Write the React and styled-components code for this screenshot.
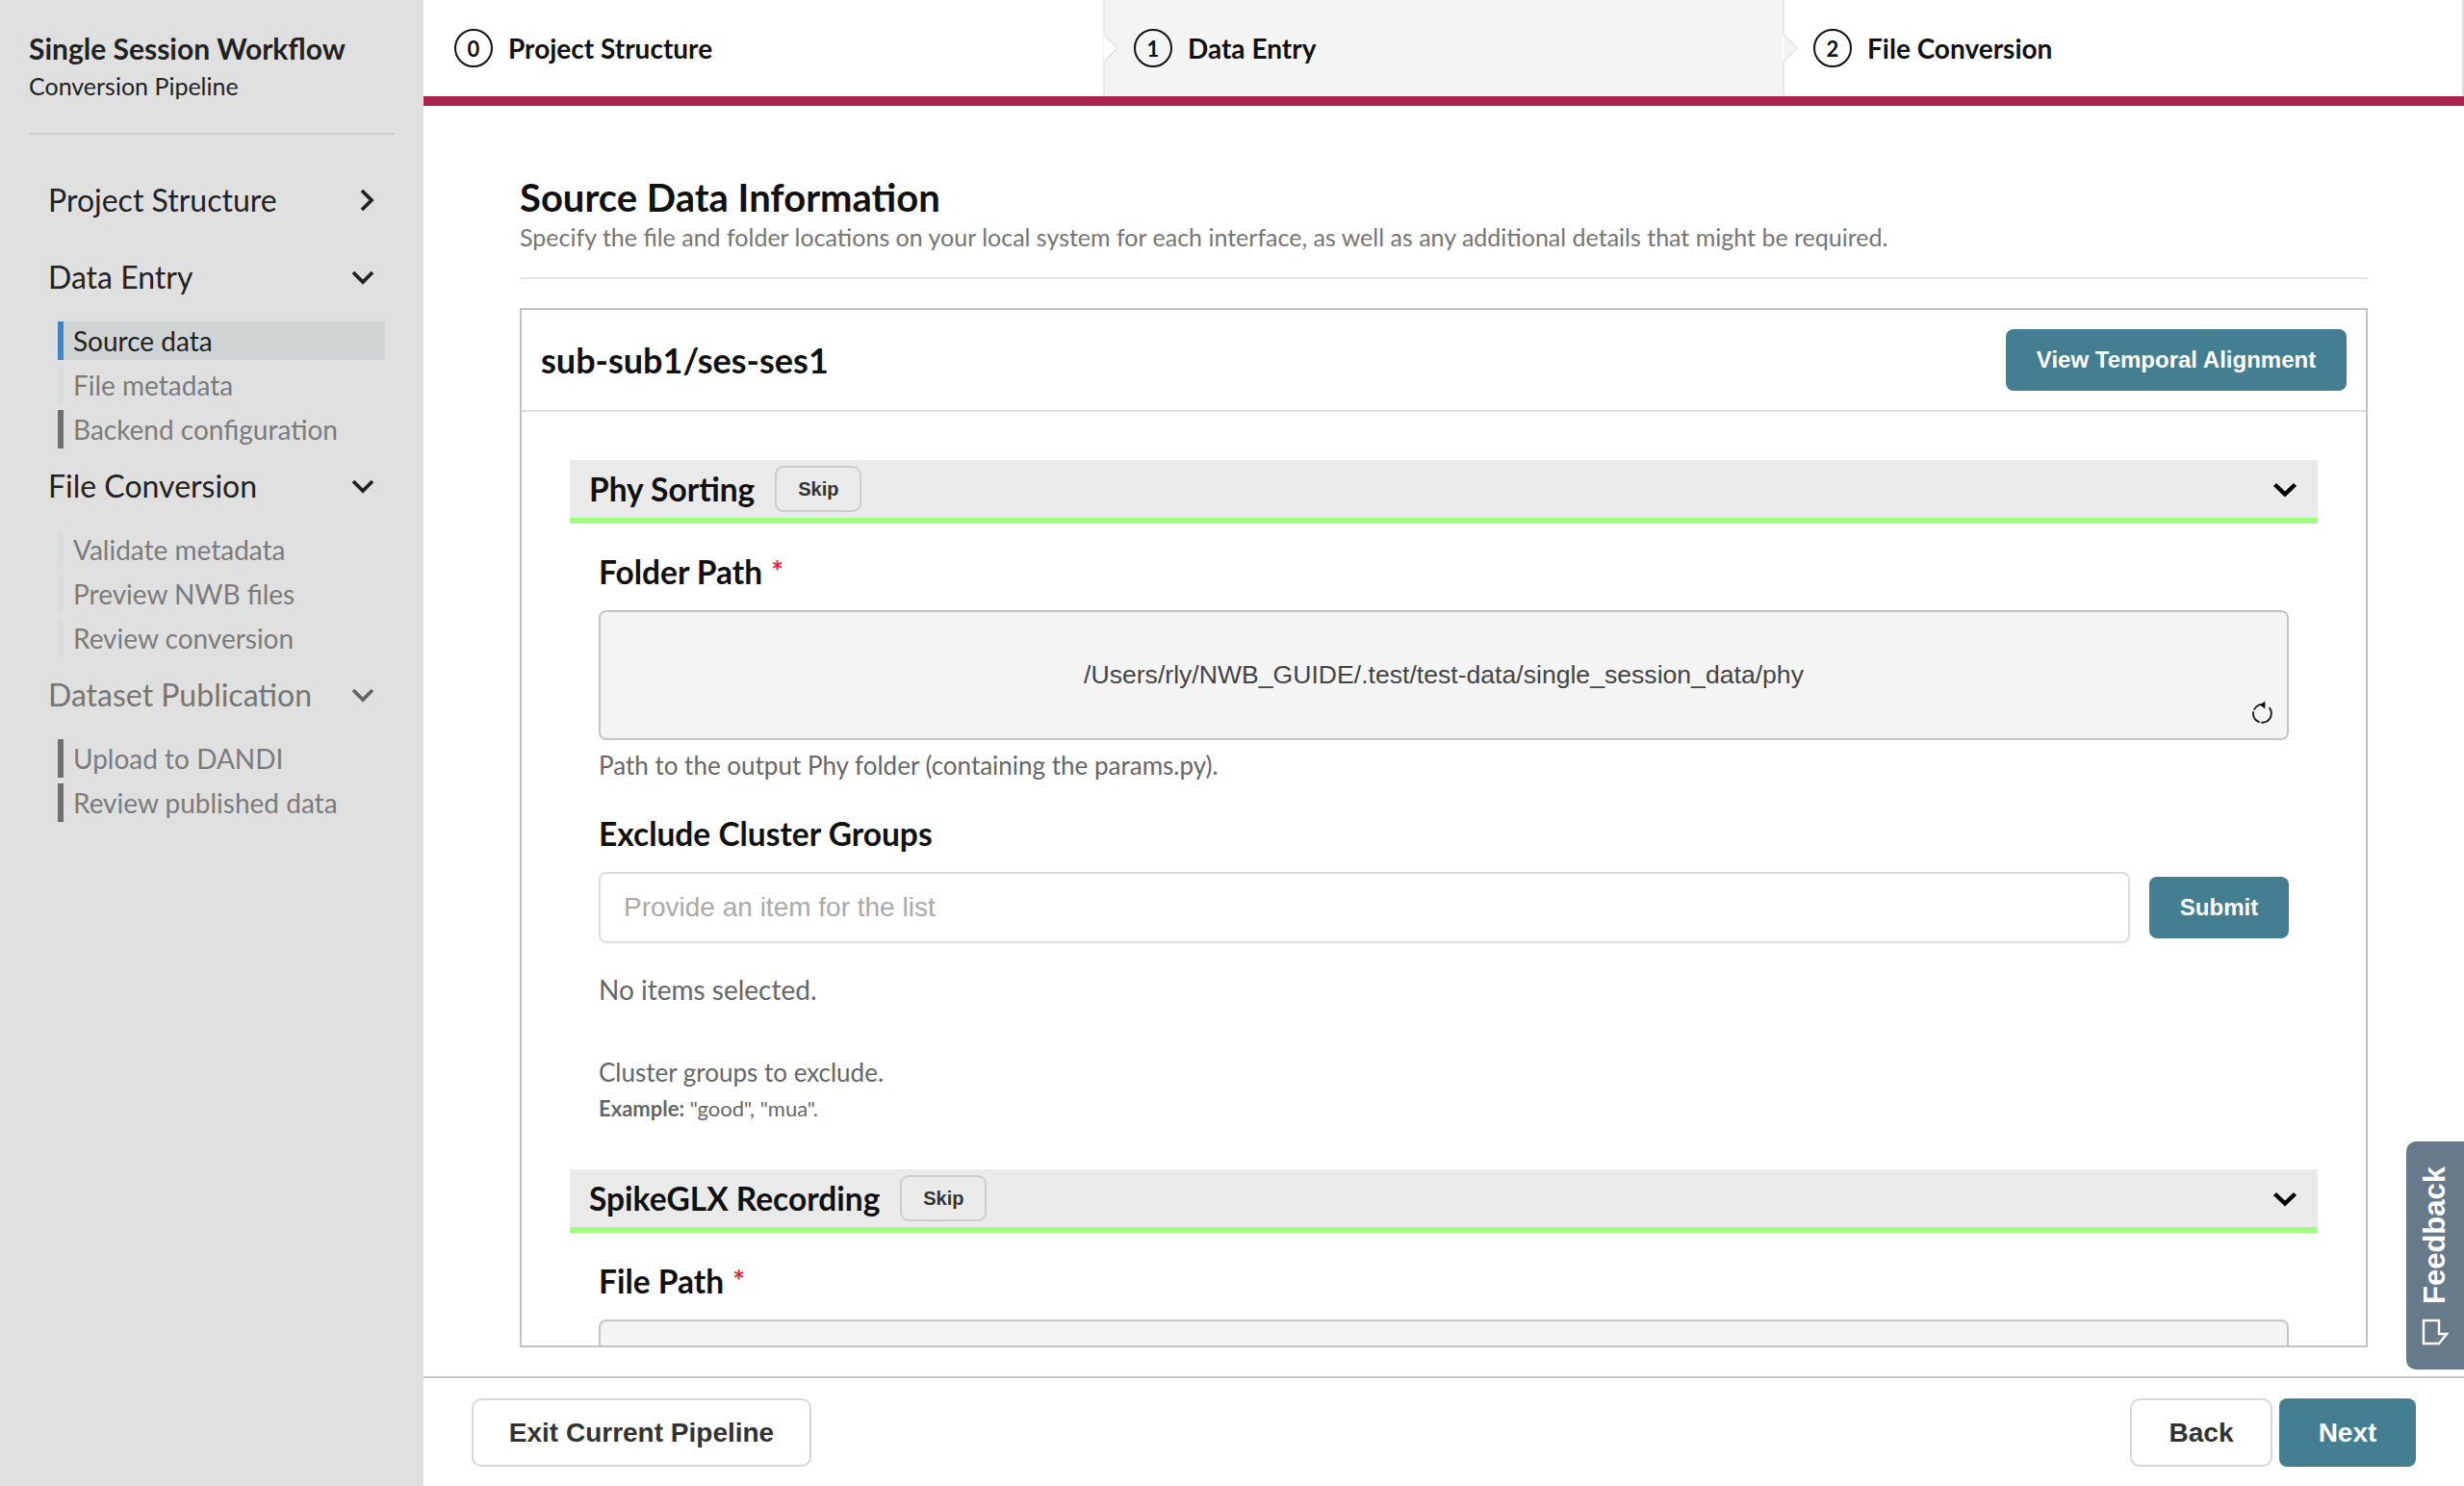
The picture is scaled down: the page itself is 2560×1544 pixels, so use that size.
import React from 'react';
import styled, { createGlobalStyle } from 'styled-components';

const GlobalStyle = createGlobalStyle`
  html, body {
    margin: 0;
    padding: 0;
    background: #fff;
    overflow: hidden;
  }
  * {
    box-sizing: border-box;
  }
`;

const lato = `Lato, "Liberation Sans", sans-serif`;
const helvetica = `"Liberation Sans", Arial, sans-serif`;

const Shell = styled.div`
  display: flex;
  position: relative;
  width: 2560px;
  height: 1544px;
  overflow: hidden;
  font-family: ${lato};
`;

const Sidebar = styled.aside`
  flex: 0 0 440px;
  background: #e0e0e0;
  padding: 0 30px;
`;

const SideHeader = styled.div`
  height: 140px;
  padding-top: 28px;
  border-bottom: 2px solid #ccc;
`;

const SideTitle = styled.div`
  font-size: 30px;
  font-weight: 700;
  line-height: 44px;
  color: #222;
`;

const SideSubtitle = styled.div`
  font-size: 25px;
  line-height: 34px;
  color: #222;
`;

const Nav = styled.nav`
  margin: 39px 0 0 20px;
`;

const NavGroup = styled.div`
  margin-bottom: ${p => (p.$open ? '0' : '20px')};
`;

const NavHeader = styled.div`
  display: flex;
  align-items: center;
  justify-content: space-between;
  height: 60px;
  width: 339px;
  padding-bottom: 3px;
  font-size: 32px;
  color: ${p => (p.$muted ? '#757575' : '#222')};
`;

const NavList = styled.div`
  display: flex;
  flex-direction: column;
  gap: 6px;
  margin: 15px 0 10px 10px;
`;

const NavItem = styled.div`
  display: flex;
  align-items: center;
  width: 340px;
  height: 40px;
  padding-left: 10px;
  border-left: 6px solid ${p => p.$bar};
  background: ${p => (p.$active ? '#cfd4d4' : 'transparent')};
  font-size: 28px;
  color: ${p => (p.$active ? '#222' : '#7b7b7b')};
`;

const Main = styled.main`
  flex: 1;
  min-width: 0;
  display: flex;
  flex-direction: column;
`;

const Stepper = styled.div`
  display: grid;
  grid-template-columns: 706px 706px 708px;
  height: 110px;
  flex: none;
  border-bottom: 10px solid #a9254b;
`;

const Step = styled.div`
  position: relative;
  display: flex;
  align-items: center;
  gap: 16px;
  padding-left: 32px;
  background: ${p => (p.$shaded ? '#f4f4f4' : '#fff')};
  border-right: ${p => (p.$last ? '2px solid #ddd' : 'none')};
`;

const StepNotch = styled.svg`
  position: absolute;
  left: 0;
  top: 0;
`;

const StepNumber = styled.span`
  display: flex;
  align-items: center;
  justify-content: center;
  width: 40px;
  height: 40px;
  border: 2px solid #111;
  border-radius: 50%;
  font-size: 22px;
  font-weight: 700;
  color: #111;
`;

const StepLabel = styled.span`
  font-size: 28px;
  font-weight: 700;
  color: #111;
`;

const Content = styled.div`
  flex: 1;
  min-height: 0;
  display: flex;
  flex-direction: column;
  padding: 70px 100px 30px;
`;

const PageTitle = styled.h1`
  margin: 0;
  font-size: 40px;
  font-weight: 700;
  line-height: 50px;
  color: #111;
`;

const PageSubtitle = styled.p`
  margin: 0 0 1px;
  font-size: 25px;
  line-height: 32px;
  color: #757575;
`;

const Rule = styled.hr`
  width: 100%;
  margin: 25px 0 30px;
  border: 0;
  border-top: 2px solid #e2e2e2;
`;

const Card = styled.section`
  flex: 1;
  min-height: 0;
  overflow: hidden;
  border: 2px solid #c2c2c2;
`;

const CardHeader = styled.div`
  display: flex;
  align-items: center;
  justify-content: space-between;
  height: 106px;
  padding: 0 20px;
  border-bottom: 2px solid #ddd;
`;

const CardTitle = styled.h2`
  margin: 0;
  font-size: 36px;
  font-weight: 700;
  color: #111;
`;

const PrimaryButton = styled.button`
  display: flex;
  align-items: center;
  justify-content: center;
  flex: none;
  width: ${p => p.$w};
  height: ${p => p.$h};
  padding: 0;
  border: 0;
  border-radius: 8px;
  background: #447f91;
  font-family: ${helvetica};
  font-size: ${p => p.$size};
  font-weight: 700;
  color: #fff;
`;

const OutlineButton = styled.button`
  display: flex;
  align-items: center;
  justify-content: center;
  width: ${p => p.$w};
  height: 71px;
  padding: 0;
  border: 2px solid #d8d8d8;
  border-radius: 10px;
  background: #fff;
  font-family: ${helvetica};
  font-size: 28px;
  font-weight: 700;
  color: #333;
`;

const CardBody = styled.div`
  padding: 50px 50px 0;
`;

const Accordion = styled.div`
  display: flex;
  align-items: center;
  height: 66px;
  margin-top: ${p => p.$mt || '0'};
  padding: 0 21px 0 20px;
  background: #eaeaea;
  border-bottom: 6px solid #9fff7f;
`;

const AccordionTitle = styled.h3`
  margin: 0;
  font-size: 33.5px;
  font-weight: 700;
  color: #111;
`;

const SkipButton = styled.button`
  width: 90px;
  height: 48px;
  margin-left: 21px;
  padding: 0;
  border: 2px solid #ccc;
  border-radius: 9px;
  background: #eaeaea;
  font-family: ${helvetica};
  font-size: 20px;
  font-weight: 700;
  color: #333;
`;

const AccordionChevron = styled.svg`
  margin-left: auto;
  margin-top: 2px;
`;

const Fields = styled.div`
  padding: 0 30px;
`;

const FieldLabel = styled.div`
  margin-top: ${p => p.$mt};
  font-size: 33.5px;
  font-weight: 700;
  line-height: 40px;
  color: #111;
`;

const Required = styled.span`
  margin-left: 9px;
  font-size: 30px;
  font-weight: 700;
  line-height: 0;
  vertical-align: 2px;
  color: #f02038;
`;

const PathBox = styled.div`
  position: relative;
  display: flex;
  align-items: center;
  justify-content: center;
  height: 135px;
  margin-top: ${p => p.$mt};
  border: 2px solid #c4c4c4;
  border-radius: 8px;
  background: #f4f4f4;
  font-family: ${helvetica};
  font-size: 26.6px;
  color: #444;
`;

const ResetIcon = styled.svg`
  position: absolute;
  right: 14px;
  bottom: 14px;
`;

const Help = styled.p`
  margin: ${p => p.$mt} 0 0;
  font-size: ${p => p.$size || '26px'};
  line-height: 32px;
  color: #666;
`;

const Example = styled.p`
  margin: 8px 0 0;
  font-size: 22px;
  line-height: 28px;
  color: #666;

  b {
    font-weight: 700;
  }
`;

const ListRow = styled.div`
  display: flex;
  align-items: center;
  gap: 20px;
  margin-top: 20px;
`;

const ListInput = styled.div`
  flex: 1;
  display: flex;
  align-items: center;
  height: 74px;
  padding-left: 24px;
  border: 2px solid #ddd;
  border-radius: 8px;
  font-family: ${helvetica};
  font-size: 28px;
  color: #aaa;
`;

const Footer = styled.footer`
  display: flex;
  align-items: flex-start;
  flex: none;
  height: 114px;
  padding: 21px 50px 0;
  border-top: 2px solid #c4c4c4;
`;

const FooterRight = styled.div`
  display: flex;
  gap: 7px;
  margin-left: auto;
`;

const FeedbackTab = styled.div`
  position: absolute;
  right: 0;
  top: 1186px;
  display: flex;
  flex-direction: column;
  align-items: center;
  justify-content: flex-end;
  width: 60px;
  height: 237px;
  padding-bottom: 25px;
  border-radius: 10px 0 0 10px;
  background: #667a89;
`;

const FeedbackText = styled.span`
  writing-mode: vertical-rl;
  transform: rotate(180deg);
  margin-bottom: 15px;
  font-family: ${helvetica};
  font-size: 31px;
  font-weight: 700;
  color: #fff;
`;

const Chevron = ({ dir, color = '#222' }) =>
  dir === 'right' ? (
    <svg width="16" height="24" viewBox="0 0 16 24" fill="none">
      <path d="M3 2l10 10L3 22" stroke={color} strokeWidth="3.8" />
    </svg>
  ) : (
    <svg width="24" height="16" viewBox="0 0 24 16" fill="none">
      <path d="M2 3l10 10L22 3" stroke={color} strokeWidth="3.8" />
    </svg>
  );

const Notch = ({ fill }) => (
  <StepNotch width="16" height="100" viewBox="0 0 16 100">
    <path d="M1 0V36L15 50L1 64V100" fill={fill} stroke="#e2e2e2" strokeWidth="1.5" />
  </StepNotch>
);

const Reset = () => (
  <ResetIcon width="24" height="26" viewBox="0 0 24 26" fill="none">
    <path
      d="M14.5 5.2a9.4 9.4 0 1 0 5 3"
      stroke="#111"
      strokeWidth="1.8"
      strokeDasharray="13 1.6 14 1.6 40"
    />
    <path d="M10 5.4l5.4-4v8z" fill="#111" />
  </ResetIcon>
);

const AccordionHead = ({ title, mt }) => (
  <Accordion $mt={mt}>
    <AccordionTitle>{title}</AccordionTitle>
    <SkipButton>Skip</SkipButton>
    <AccordionChevron width="26" height="18" viewBox="0 0 26 18" fill="none">
      <path d="M2.5 3.5L13 13.5L23.5 3.5" stroke="#000" strokeWidth="4.4" />
    </AccordionChevron>
  </Accordion>
);

const steps = ['Project Structure', 'Data Entry', 'File Conversion'];

const navGroups = [
  { title: 'Project Structure', dir: 'right' },
  {
    title: 'Data Entry',
    items: [
      { label: 'Source data', bar: '#3f86c8', active: true },
      { label: 'File metadata', bar: '#d9dcdc' },
      { label: 'Backend configuration', bar: '#6f6f6f' },
    ],
  },
  {
    title: 'File Conversion',
    items: [
      { label: 'Validate metadata', bar: '#d9dcdc' },
      { label: 'Preview NWB files', bar: '#d9dcdc' },
      { label: 'Review conversion', bar: '#d9dcdc' },
    ],
  },
  {
    title: 'Dataset Publication',
    muted: true,
    items: [
      { label: 'Upload to DANDI', bar: '#6f6f6f' },
      { label: 'Review published data', bar: '#6f6f6f' },
    ],
  },
];

const App = () => (
  <Shell>
    <GlobalStyle />
    <Sidebar>
      <SideHeader>
        <SideTitle>Single Session Workflow</SideTitle>
        <SideSubtitle>Conversion Pipeline</SideSubtitle>
      </SideHeader>
      <Nav>
        {navGroups.map(group => (
          <NavGroup key={group.title} $open={!!group.items}>
            <NavHeader $muted={group.muted}>
              {group.title}
              <Chevron dir={group.dir} color={group.muted ? '#666' : '#222'} />
            </NavHeader>
            {group.items && (
              <NavList>
                {group.items.map(item => (
                  <NavItem key={item.label} $bar={item.bar} $active={item.active}>
                    {item.label}
                  </NavItem>
                ))}
              </NavList>
            )}
          </NavGroup>
        ))}
      </Nav>
    </Sidebar>
    <Main>
      <Stepper>
        {steps.map((label, i) => (
          <Step key={label} $shaded={i === 1} $last={i === 2}>
            {i > 0 && <Notch fill={i === 2 ? '#f4f4f4' : '#fff'} />}
            <StepNumber>{i}</StepNumber>
            <StepLabel>{label}</StepLabel>
          </Step>
        ))}
      </Stepper>
      <Content>
        <PageTitle>Source Data Information</PageTitle>
        <PageSubtitle>
          Specify the file and folder locations on your local system for each interface, as well as any additional details that might be required.
        </PageSubtitle>
        <Rule />
        <Card>
          <CardHeader>
            <CardTitle>sub-sub1/ses-ses1</CardTitle>
            <PrimaryButton $w="354px" $h="64px" $size="24px">View Temporal Alignment</PrimaryButton>
          </CardHeader>
          <CardBody>
            <AccordionHead title="Phy Sorting" />
            <Fields>
              <FieldLabel $mt="30px">Folder Path<Required>*</Required></FieldLabel>
              <PathBox $mt="20px">
                /Users/rly/NWB_GUIDE/.test/test-data/single_session_data/phy
                <Reset />
              </PathBox>
              <Help $mt="10px">Path to the output Phy folder (containing the params.py).</Help>
              <FieldLabel $mt="35px">Exclude Cluster Groups</FieldLabel>
              <ListRow>
                <ListInput>Provide an item for the list</ListInput>
                <PrimaryButton $w="145px" $h="64px" $size="24px">Submit</PrimaryButton>
              </ListRow>
              <Help $mt="32px" $size="28px">No items selected.</Help>
              <Help $mt="54px">Cluster groups to exclude.</Help>
              <Example><b>Example:</b> "good", "mua".</Example>
            </Fields>
            <AccordionHead title="SpikeGLX Recording" mt="49px" />
            <Fields>
              <FieldLabel $mt="30px">File Path<Required>*</Required></FieldLabel>
              <PathBox $mt="20px" />
            </Fields>
          </CardBody>
        </Card>
      </Content>
      <Footer>
        <OutlineButton $w="353px">Exit Current Pipeline</OutlineButton>
        <FooterRight>
          <OutlineButton $w="148px">Back</OutlineButton>
          <PrimaryButton $w="142px" $h="71px" $size="28px">Next</PrimaryButton>
        </FooterRight>
      </Footer>
    </Main>
    <FeedbackTab>
      <FeedbackText>Feedback</FeedbackText>
      <svg width="28" height="28" viewBox="0 0 28 28" fill="none">
        <path d="M2 2H18V16H26L18 26H2Z" stroke="#fff" strokeWidth="2.4" />
      </svg>
    </FeedbackTab>
  </Shell>
);

export default App;
